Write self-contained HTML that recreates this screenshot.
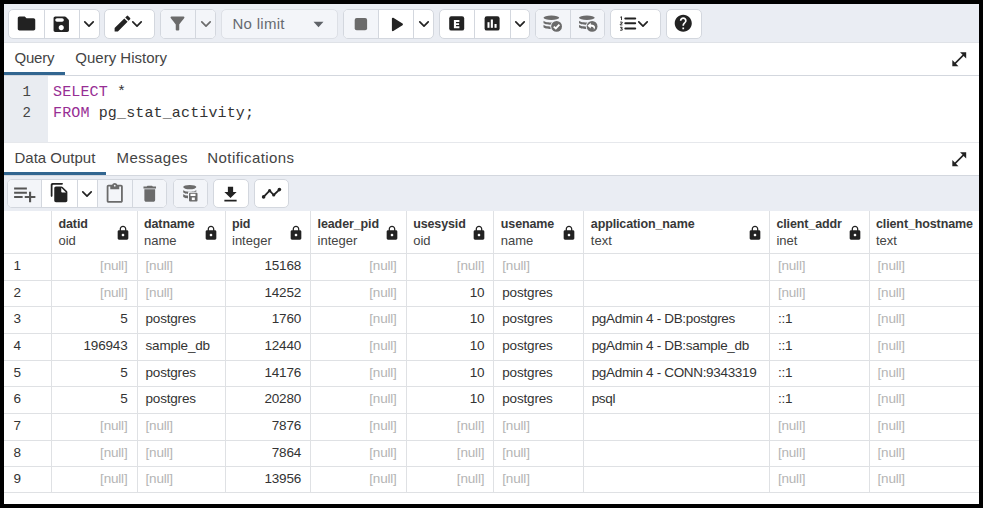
<!DOCTYPE html><html><head><meta charset="utf-8"><style>
html,body{margin:0;padding:0;width:983px;height:508px;overflow:hidden;background:#000}
body{position:relative;font-family:'Liberation Sans', sans-serif;color:#222}
</style></head><body>
<div style="position:absolute;left:4px;top:4px;width:975px;height:500px;background:#fff"></div>
<div style="position:absolute;left:4px;top:4px;width:975px;height:38px;background:#eaedf3;border-bottom:1px solid #dfe2e7"></div>
<div style="position:absolute;left:8px;top:9px;width:92px;height:30px;box-sizing:border-box;border:1px solid #d3d7de;border-radius:5px;background:#fff;overflow:hidden">
<div style="position:absolute;left:34.6px;top:0;width:1px;height:100%;background:#d3d7de"></div>
<div style="position:absolute;left:70px;top:0;width:1px;height:100%;background:#d3d7de"></div>
</div>
<svg style="position:absolute;left:16px;top:13px" width="21" height="21" viewBox="0 0 24 24"><path fill="#222" d="M10 4H4c-1.1 0-1.99.9-1.99 2L2 18c0 1.1.9 2 2 2h16c1.1 0 2-.9 2-2V8c0-1.1-.9-2-2-2h-8l-2-2z"/></svg>
<svg style="position:absolute;left:51.2px;top:13.5px" width="20.5" height="20.5" viewBox="0 0 24 24"><path fill="#222" d="M17.59 3.59c-.38-.38-.89-.59-1.42-.59H5c-1.11 0-2 .9-2 2v14c0 1.1.9 2 2 2h14c1.1 0 2-.9 2-2V7.83c0-.53-.21-1.04-.59-1.41l-2.82-2.83zM12 19c-1.66 0-3-1.34-3-3s1.34-3 3-3 3 1.34 3 3-1.34 3-3 3zm1-10H7c-1.1 0-2-.9-2-2s.9-2 2-2h6c1.1 0 2 .9 2 2s-.9 2-2 2z"/></svg>
<svg style="position:absolute;left:81.2px;top:15.5px" width="16" height="16" viewBox="0 0 16 16"><polyline points="3.8,5.9 8,10.1 12.2,5.9" fill="none" stroke="#222" stroke-width="1.7" stroke-linecap="round" stroke-linejoin="round"/></svg>
<div style="position:absolute;left:104px;top:9px;width:51px;height:30px;box-sizing:border-box;border:1px solid #d3d7de;border-radius:5px;background:#fff;overflow:hidden">
</div>
<svg style="position:absolute;left:111.6px;top:12.5px" width="21" height="21" viewBox="0 0 24 24"><path fill="#222" d="M3 17.25V21h3.75L17.81 9.94l-3.75-3.75L3 17.25zM20.71 7.04c.39-.39.39-1.02 0-1.41l-2.34-2.34a.9959.9959 0 0 0-1.41 0l-1.83 1.83 3.75 3.75 1.83-1.83z"/></svg>
<svg style="position:absolute;left:129.2px;top:15.5px" width="16" height="16" viewBox="0 0 16 16"><polyline points="3.8,5.9 8,10.1 12.2,5.9" fill="none" stroke="#222" stroke-width="1.7" stroke-linecap="round" stroke-linejoin="round"/></svg>
<div style="position:absolute;left:160px;top:9px;width:56px;height:30px;box-sizing:border-box;border:1px solid #d3d7de;border-radius:5px;background:#fff;overflow:hidden">
<div style="position:absolute;left:-1px;top:0;width:56px;height:100%;background:#f3f5f9"></div>
<div style="position:absolute;left:34.19999999999999px;top:0;width:1px;height:100%;background:#d3d7de"></div>
</div>
<svg style="position:absolute;left:167.2px;top:12.6px" width="21" height="21" viewBox="0 0 24 24"><path fill="#6b6b6b" d="M4.25 5.61C6.27 8.2 10 13 10 13v6c0 .55.45 1 1 1h2c.55 0 1-.45 1-1v-6s3.72-4.8 5.74-7.39c.51-.66.04-1.61-.79-1.61H5.04c-.83 0-1.3.95-.79 1.61z"/></svg>
<svg style="position:absolute;left:197.5px;top:15.5px" width="16" height="16" viewBox="0 0 16 16"><polyline points="3.8,5.9 8,10.1 12.2,5.9" fill="none" stroke="#6b6b6b" stroke-width="1.7" stroke-linecap="round" stroke-linejoin="round"/></svg>
<div style="position:absolute;left:221px;top:9px;width:117px;height:30px;box-sizing:border-box;border:1px solid #dde0e6;border-radius:5px;background:#f3f5f9"></div>
<div style="position:absolute;left:232.4px;top:14.6px;white-space:pre;font-size:15px;line-height:18px;color:#666a70;letter-spacing:0.3px">No limit</div>
<svg style="position:absolute;left:313px;top:21px" width="11" height="7" viewBox="0 0 11 7"><path d="M0.5 0.8h10L5.5 6.2z" fill="#5f6368"/></svg>
<div style="position:absolute;left:343px;top:9px;width:91px;height:30px;box-sizing:border-box;border:1px solid #d3d7de;border-radius:5px;background:#fff;overflow:hidden">
<div style="position:absolute;left:-1px;top:0;width:35.19999999999999px;height:100%;background:#f3f5f9"></div>
<div style="position:absolute;left:34.19999999999999px;top:0;width:1px;height:100%;background:#d3d7de"></div>
<div style="position:absolute;left:69.30000000000001px;top:0;width:1px;height:100%;background:#d3d7de"></div>
</div>
<svg style="position:absolute;left:354px;top:17px" width="14" height="14" viewBox="354 17 14 14"><rect x="354.7" y="18" width="12.4" height="12.3" rx="2" fill="#6b6b6b"/></svg>
<svg style="position:absolute;left:390px;top:16px" width="15" height="16" viewBox="390 16 15 16"><path d="M391.9 18.6c0-.8.8-1.2 1.4-.8l9.2 5.8c.6.4.6 1.2 0 1.6l-9.2 5.8c-.6.4-1.4 0-1.4-.8z" fill="#222"/></svg>
<svg style="position:absolute;left:416px;top:15.5px" width="16" height="16" viewBox="0 0 16 16"><polyline points="3.8,5.9 8,10.1 12.2,5.9" fill="none" stroke="#222" stroke-width="1.7" stroke-linecap="round" stroke-linejoin="round"/></svg>
<div style="position:absolute;left:439px;top:9px;width:91px;height:30px;box-sizing:border-box;border:1px solid #d3d7de;border-radius:5px;background:#fff;overflow:hidden">
<div style="position:absolute;left:34.19999999999999px;top:0;width:1px;height:100%;background:#d3d7de"></div>
<div style="position:absolute;left:69.5px;top:0;width:1px;height:100%;background:#d3d7de"></div>
</div>
<svg style="position:absolute;left:440px;top:10px" width="90" height="28" viewBox="440 10 90 28"><rect x="449.2" y="16.3" width="15" height="14.3" rx="2.2" fill="#222"/><path d="M453.9 19.9h5.5v2h-3.4v1.3h3.1v1.9h-3.1v1.2h3.4v2H453.9z" fill="#fff"/><rect x="484.6" y="16.3" width="15" height="14.3" rx="2.2" fill="#222"/><rect x="487.5" y="22.2" width="2" height="5.6" fill="#fff"/><rect x="490.8" y="19.5" width="2.1" height="8.3" fill="#fff"/><rect x="494.5" y="24" width="2.1" height="3.8" fill="#fff"/></svg>
<svg style="position:absolute;left:511.79999999999995px;top:15.5px" width="16" height="16" viewBox="0 0 16 16"><polyline points="3.8,5.9 8,10.1 12.2,5.9" fill="none" stroke="#222" stroke-width="1.7" stroke-linecap="round" stroke-linejoin="round"/></svg>
<div style="position:absolute;left:535px;top:9px;width:70px;height:30px;box-sizing:border-box;border:1px solid #d3d7de;border-radius:5px;background:#fff;overflow:hidden">
<div style="position:absolute;left:-1px;top:0;width:70px;height:100%;background:#f3f5f9"></div>
<div style="position:absolute;left:34px;top:0;width:1px;height:100%;background:#d3d7de"></div>
</div>
<svg style="position:absolute;left:535px;top:9px" width="70" height="30" viewBox="535 9 70 30"><ellipse cx="551.35" cy="17.7" rx="7.85" ry="2.2" fill="#6b6b6b"/><path d="M543.5 20.4v2.3c0 1.1 3.5324999999999998 2 7.85 2s7.85 -.9 7.85 -2V20.4c0 1.1-3.5324999999999998 2-7.85 2s-7.85-.9-7.85-2z" fill="#6b6b6b"/><path d="M543.5 24.4v2.6c0 1.1 3.5324999999999998 2 7.85 2s7.85 -.9 7.85 -2V24.4c0 1.1-3.5324999999999998 2-7.85 2s-7.85-.9-7.85-2z" fill="#6b6b6b"/><circle cx="556.6" cy="26.4" r="6.3" fill="#f3f5f9"/><circle cx="556.6" cy="26.4" r="5.4" fill="#6b6b6b"/><polyline points="553.8,26.6 555.8,28.5 559.4,24.7" fill="none" stroke="#fff" stroke-width="1.9"/><ellipse cx="586.85" cy="17.7" rx="7.85" ry="2.2" fill="#6b6b6b"/><path d="M579 20.4v2.3c0 1.1 3.5324999999999998 2 7.85 2s7.85 -.9 7.85 -2V20.4c0 1.1-3.5324999999999998 2-7.85 2s-7.85-.9-7.85-2z" fill="#6b6b6b"/><path d="M579 24.4v2.6c0 1.1 3.5324999999999998 2 7.85 2s7.85 -.9 7.85 -2V24.4c0 1.1-3.5324999999999998 2-7.85 2s-7.85-.9-7.85-2z" fill="#6b6b6b"/><circle cx="592.1" cy="26.4" r="6.3" fill="#f3f5f9"/><circle cx="592.1" cy="26.4" r="5.4" fill="#6b6b6b"/><path d="M590.8 22.8l-3.4 2.9 3.4 2.9v-1.9c1.5 0 2.4.5 2.9 1.4.2 .4.2 1 .1 1.6.9-.7 1.3-1.6 1.2-2.6-.2-1.5-1.6-2.5-4.2-2.6z" fill="#fff"/></svg>
<div style="position:absolute;left:610px;top:9px;width:51px;height:30px;box-sizing:border-box;border:1px solid #d3d7de;border-radius:5px;background:#fff;overflow:hidden">
</div>
<svg style="position:absolute;left:610px;top:9px" width="51" height="30" viewBox="610 9 51 30"><g stroke="#222" stroke-width="2" stroke-linecap="round"><line x1="625.3" y1="18.4" x2="635.2" y2="18.4"/><line x1="625.3" y1="23.3" x2="635.2" y2="23.3"/><line x1="625.3" y1="28.6" x2="635.2" y2="28.6"/></g><g fill="none" stroke="#222" stroke-width="0.9"><path d="M620.3 17.3l1.2-.6v3.4"/><path d="M620.1 22.1h2.1v1.1l-2.1 1.2v.5h2.3"/><path d="M620.1 27.3h2.1l-1 1.3h1v1.6h-2.1"/></g></svg>
<svg style="position:absolute;left:635.2px;top:15.8px" width="16" height="16" viewBox="0 0 16 16"><polyline points="3.8,5.9 8,10.1 12.2,5.9" fill="none" stroke="#222" stroke-width="1.7" stroke-linecap="round" stroke-linejoin="round"/></svg>
<div style="position:absolute;left:666px;top:9px;width:36px;height:30px;box-sizing:border-box;border:1px solid #d3d7de;border-radius:5px;background:#fff;overflow:hidden">
</div>
<svg style="position:absolute;left:673.1px;top:12.7px" width="20.5" height="20.5" viewBox="0 0 24 24"><path fill="#222" d="M12 2C6.48 2 2 6.48 2 12s4.48 10 10 10 10-4.48 10-10S17.52 2 12 2zm1 17h-2v-2h2v2zm2.07-7.75-.9.92C13.45 12.9 13 13.5 13 15h-2v-.5c0-1.1.45-2.1 1.17-2.83l1.24-1.26c.37-.36.59-.86.59-1.41 0-1.1-.9-2-2-2s-2 .9-2 2H8c0-2.21 1.79-4 4-4s4 1.79 4 4c0 .88-.36 1.68-.93 2.25z"/></svg>
<div style="position:absolute;left:4px;top:43px;width:975px;height:32px;background:#fff;border-bottom:1px solid #d3d7de"></div>
<div style="position:absolute;left:14.5px;top:49px;white-space:pre;font-size:15px;line-height:18px;color:#444;letter-spacing:-0.2px">Query</div>
<div style="position:absolute;left:75.3px;top:49px;white-space:pre;font-size:15px;line-height:18px;color:#444">Query History</div>
<div style="position:absolute;left:4px;top:72px;width:60.5px;height:3px;background:#326690"></div>
<svg style="position:absolute;left:949.9px;top:49.6px" width="18.5" height="18.5" viewBox="0 0 24 24"><path fill="#222" d="M21 11V3h-8l3.29 3.29-10 10L3 13v8h8l-3.29-3.29 10-10z"/></svg>
<div style="position:absolute;left:4px;top:76px;width:44px;height:66px;background:#e9ecf1"></div>
<div style="position:absolute;left:4px;top:142px;width:975px;height:1px;background:#e6e8ec"></div>
<div style="position:absolute;left:20px;top:82px;white-space:pre;font-family:'Liberation Mono', monospace;font-size:14px;line-height:21.3px;color:#444;width:11px;text-align:right">1</div>
<div style="position:absolute;left:20px;top:103.3px;white-space:pre;font-family:'Liberation Mono', monospace;font-size:14px;line-height:21.3px;color:#444;width:11px;text-align:right">2</div>
<div style="position:absolute;left:53px;top:82px;white-space:pre;font-family:'Liberation Mono', monospace;font-size:15px;line-height:21.3px;color:#333;letter-spacing:0.14px"><span style="color:#972e94">SELECT</span> *</div>
<div style="position:absolute;left:53px;top:103.3px;white-space:pre;font-family:'Liberation Mono', monospace;font-size:15px;line-height:21.3px;color:#333;letter-spacing:0.14px"><span style="color:#972e94">FROM</span> pg_stat_activity;</div>
<div style="position:absolute;left:14.5px;top:149px;white-space:pre;font-size:15px;line-height:18px;color:#444">Data Output</div>
<div style="position:absolute;left:116.6px;top:149px;white-space:pre;font-size:15px;line-height:18px;color:#444;letter-spacing:0.38px">Messages</div>
<div style="position:absolute;left:207.3px;top:149px;white-space:pre;font-size:15px;line-height:18px;color:#444;letter-spacing:0.42px">Notifications</div>
<div style="position:absolute;left:4px;top:172px;width:102px;height:3px;background:#326690"></div>
<div style="position:absolute;left:4px;top:175px;width:975px;height:1px;background:#d3d7de"></div>
<svg style="position:absolute;left:949.9px;top:149.6px" width="18.5" height="18.5" viewBox="0 0 24 24"><path fill="#222" d="M21 11V3h-8l3.29 3.29-10 10L3 13v8h8l-3.29-3.29 10-10z"/></svg>
<div style="position:absolute;left:4px;top:176px;width:975px;height:35px;background:#eaedf3"></div>
<div style="position:absolute;left:7px;top:178.5px;width:160px;height:29.5px;box-sizing:border-box;border:1px solid #d3d7de;border-radius:5px;background:#fff;overflow:hidden">
<div style="position:absolute;left:-1px;top:0;width:34px;height:100%;background:#f3f5f9"></div>
<div style="position:absolute;left:89px;top:0;width:70px;height:100%;background:#f3f5f9"></div>
<div style="position:absolute;left:33px;top:0;width:1px;height:100%;background:#d3d7de"></div>
<div style="position:absolute;left:68.5px;top:0;width:1px;height:100%;background:#d3d7de"></div>
<div style="position:absolute;left:89px;top:0;width:1px;height:100%;background:#d3d7de"></div>
<div style="position:absolute;left:124px;top:0;width:1px;height:100%;background:#d3d7de"></div>
</div>
<svg style="position:absolute;left:11.8px;top:181.2px" width="25.5" height="25.5" viewBox="0 0 24 24"><path fill="#555" d="M14 10H2v2h12v-2zm0-4H2v2h12V6zm4 8v-4h-2v4h-4v2h4v4h2v-4h4v-2h-4zM2 16h8v-2H2v2z"/></svg>
<svg style="position:absolute;left:49px;top:182px" width="21" height="21" viewBox="0 0 24 24"><path fill="#222" d="M15 1H4c-1.1 0-2 .9-2 2v13c0 .55.45 1 1 1s1-.45 1-1V4c0-.55.45-1 1-1h10c.55 0 1-.45 1-1s-.45-1-1-1zm.59 4.59 4.83 4.83c.37.37.58.88.58 1.41V21c0 1.1-.9 2-2 2H7.99C6.89 23 6 22.1 6 21l.01-14c0-1.1.89-2 1.99-2h6.17c.53 0 1.04.21 1.42.59zM15 12h4.5L14 6.5V11c0 .55.45 1 1 1z"/></svg>
<svg style="position:absolute;left:79.2px;top:185.5px" width="16" height="16" viewBox="0 0 16 16"><polyline points="3.8,5.9 8,10.1 12.2,5.9" fill="none" stroke="#222" stroke-width="1.7" stroke-linecap="round" stroke-linejoin="round"/></svg>
<svg style="position:absolute;left:104.2px;top:182.6px" width="21.5" height="21.5" viewBox="0 0 24 24"><path fill="#6b6b6b" d="M19 2h-4.18C14.4.84 13.3 0 12 0c-1.3 0-2.4.84-2.82 2H5c-1.1 0-2 .9-2 2v16c0 1.1.9 2 2 2h14c1.1 0 2-.9 2-2V4c0-1.1-.9-2-2-2zm-7 0c.55 0 1 .45 1 1s-.45 1-1 1-1-.45-1-1 .45-1 1-1zm7 18H5V4h2v3h10V4h2v16z"/></svg>
<svg style="position:absolute;left:139.2px;top:183.2px" width="21.5" height="21.5" viewBox="0 0 24 24"><path fill="#6b6b6b" d="M6 19c0 1.1.9 2 2 2h8c1.1 0 2-.9 2-2V7H6v12zM19 4h-3.5l-1-1h-5l-1 1H5v2h14V4z"/></svg>
<div style="position:absolute;left:172.5px;top:178.5px;width:35px;height:29.5px;box-sizing:border-box;border:1px solid #d3d7de;border-radius:5px;background:#fff;overflow:hidden">
<div style="position:absolute;left:-1.0px;top:0;width:35.0px;height:100%;background:#f3f5f9"></div>
</div>
<svg style="position:absolute;left:172px;top:178px" width="36" height="30" viewBox="172 178 36 30"><ellipse cx="189.75" cy="187.1" rx="6.55" ry="2.2" fill="#6b6b6b"/><path d="M183.2 189.8v2.3c0 1.1 2.9475 2 6.55 2s6.55 -.9 6.55 -2V189.8c0 1.1-2.9475 2-6.55 2s-6.55-.9-6.55-2z" fill="#6b6b6b"/><path d="M183.2 193.8v2.6c0 1.1 2.9475 2 6.55 2s6.55 -.9 6.55 -2V193.8c0 1.1-2.9475 2-6.55 2s-6.55-.9-6.55-2z" fill="#6b6b6b"/><rect x="188" y="191.8" width="10.5" height="10.7" rx="1.2" fill="#f3f5f9"/><rect x="189" y="192.8" width="8.5" height="8.7" rx="1" fill="#6b6b6b"/><rect x="190.5" y="193.8" width="5" height="2.2" fill="#fff"/><rect x="191.8" y="197.5" width="3" height="2.6" fill="#fff"/></svg>
<div style="position:absolute;left:213px;top:178.5px;width:35.5px;height:29.5px;box-sizing:border-box;border:1px solid #d3d7de;border-radius:5px;background:#fff;overflow:hidden">
</div>
<svg style="position:absolute;left:220.3px;top:183.5px" width="21" height="21" viewBox="0 0 24 24"><path fill="#222" d="M19 9h-4V3H9v6H5l7 7 7-7zM5 18v2h14v-2H5z"/></svg>
<div style="position:absolute;left:253.5px;top:178.5px;width:35.5px;height:29.5px;box-sizing:border-box;border:1px solid #d3d7de;border-radius:5px;background:#fff;overflow:hidden">
</div>
<svg style="position:absolute;left:256px;top:182px" width="32" height="22" viewBox="256 182 32 22"><polyline points="263.6,196.9 269.6,190.7 273.7,195 279.4,189.6" fill="none" stroke="#222" stroke-width="1.8" stroke-linejoin="round"/><circle cx="263.6" cy="196.9" r="1.8" fill="#222"/><circle cx="269.6" cy="190.7" r="1.6" fill="#222"/><circle cx="273.7" cy="195" r="1.6" fill="#222"/><circle cx="279.4" cy="189.6" r="1.8" fill="#222"/></svg>
<div style="position:absolute;left:4px;top:211px;width:975px;height:42.400000000000006px;background:#fff"></div>
<div style="position:absolute;left:58.5px;top:217.3px;white-space:pre;font-size:12.5px;font-weight:bold;line-height:15px;color:#383838;letter-spacing:-0.12px">datid</div>
<div style="position:absolute;left:58.5px;top:233px;white-space:pre;font-size:13px;line-height:15px;color:#444">oid</div>
<svg style="position:absolute;left:114.5px;top:224.7px" width="16" height="16" viewBox="0 0 24 24"><path fill="#222" d="M18 8h-1V6c0-2.76-2.24-5-5-5S7 3.24 7 6v2H6c-1.1 0-2 .9-2 2v10c0 1.1.9 2 2 2h12c1.1 0 2-.9 2-2V10c0-1.1-.9-2-2-2zm-6 9c-1.1 0-2-.9-2-2s.9-2 2-2 2 .9 2 2-.9 2-2 2zm3.1-9H8.9V6c0-1.71 1.39-3.1 3.1-3.1 1.71 0 3.1 1.39 3.1 3.1v2z"/></svg>
<div style="position:absolute;left:144px;top:217.3px;white-space:pre;font-size:12.5px;font-weight:bold;line-height:15px;color:#383838;letter-spacing:-0.12px">datname</div>
<div style="position:absolute;left:144px;top:233px;white-space:pre;font-size:13px;line-height:15px;color:#444">name</div>
<svg style="position:absolute;left:202.5px;top:224.7px" width="16" height="16" viewBox="0 0 24 24"><path fill="#222" d="M18 8h-1V6c0-2.76-2.24-5-5-5S7 3.24 7 6v2H6c-1.1 0-2 .9-2 2v10c0 1.1.9 2 2 2h12c1.1 0 2-.9 2-2V10c0-1.1-.9-2-2-2zm-6 9c-1.1 0-2-.9-2-2s.9-2 2-2 2 .9 2 2-.9 2-2 2zm3.1-9H8.9V6c0-1.71 1.39-3.1 3.1-3.1 1.71 0 3.1 1.39 3.1 3.1v2z"/></svg>
<div style="position:absolute;left:232px;top:217.3px;white-space:pre;font-size:12.5px;font-weight:bold;line-height:15px;color:#383838;letter-spacing:-0.12px">pid</div>
<div style="position:absolute;left:232px;top:233px;white-space:pre;font-size:13px;line-height:15px;color:#444">integer</div>
<svg style="position:absolute;left:288.1px;top:224.7px" width="16" height="16" viewBox="0 0 24 24"><path fill="#222" d="M18 8h-1V6c0-2.76-2.24-5-5-5S7 3.24 7 6v2H6c-1.1 0-2 .9-2 2v10c0 1.1.9 2 2 2h12c1.1 0 2-.9 2-2V10c0-1.1-.9-2-2-2zm-6 9c-1.1 0-2-.9-2-2s.9-2 2-2 2 .9 2 2-.9 2-2 2zm3.1-9H8.9V6c0-1.71 1.39-3.1 3.1-3.1 1.71 0 3.1 1.39 3.1 3.1v2z"/></svg>
<div style="position:absolute;left:317.6px;top:217.3px;white-space:pre;font-size:12.5px;font-weight:bold;line-height:15px;color:#383838;letter-spacing:-0.12px">leader_pid</div>
<div style="position:absolute;left:317.6px;top:233px;white-space:pre;font-size:13px;line-height:15px;color:#444">integer</div>
<svg style="position:absolute;left:383.7px;top:224.7px" width="16" height="16" viewBox="0 0 24 24"><path fill="#222" d="M18 8h-1V6c0-2.76-2.24-5-5-5S7 3.24 7 6v2H6c-1.1 0-2 .9-2 2v10c0 1.1.9 2 2 2h12c1.1 0 2-.9 2-2V10c0-1.1-.9-2-2-2zm-6 9c-1.1 0-2-.9-2-2s.9-2 2-2 2 .9 2 2-.9 2-2 2zm3.1-9H8.9V6c0-1.71 1.39-3.1 3.1-3.1 1.71 0 3.1 1.39 3.1 3.1v2z"/></svg>
<div style="position:absolute;left:413.2px;top:217.3px;white-space:pre;font-size:12.5px;font-weight:bold;line-height:15px;color:#383838;letter-spacing:-0.12px">usesysid</div>
<div style="position:absolute;left:413.2px;top:233px;white-space:pre;font-size:13px;line-height:15px;color:#444">oid</div>
<svg style="position:absolute;left:471.3px;top:224.7px" width="16" height="16" viewBox="0 0 24 24"><path fill="#222" d="M18 8h-1V6c0-2.76-2.24-5-5-5S7 3.24 7 6v2H6c-1.1 0-2 .9-2 2v10c0 1.1.9 2 2 2h12c1.1 0 2-.9 2-2V10c0-1.1-.9-2-2-2zm-6 9c-1.1 0-2-.9-2-2s.9-2 2-2 2 .9 2 2-.9 2-2 2zm3.1-9H8.9V6c0-1.71 1.39-3.1 3.1-3.1 1.71 0 3.1 1.39 3.1 3.1v2z"/></svg>
<div style="position:absolute;left:500.8px;top:217.3px;white-space:pre;font-size:12.5px;font-weight:bold;line-height:15px;color:#383838;letter-spacing:-0.12px">usename</div>
<div style="position:absolute;left:500.8px;top:233px;white-space:pre;font-size:13px;line-height:15px;color:#444">name</div>
<svg style="position:absolute;left:561.3px;top:224.7px" width="16" height="16" viewBox="0 0 24 24"><path fill="#222" d="M18 8h-1V6c0-2.76-2.24-5-5-5S7 3.24 7 6v2H6c-1.1 0-2 .9-2 2v10c0 1.1.9 2 2 2h12c1.1 0 2-.9 2-2V10c0-1.1-.9-2-2-2zm-6 9c-1.1 0-2-.9-2-2s.9-2 2-2 2 .9 2 2-.9 2-2 2zm3.1-9H8.9V6c0-1.71 1.39-3.1 3.1-3.1 1.71 0 3.1 1.39 3.1 3.1v2z"/></svg>
<div style="position:absolute;left:590.8px;top:217.3px;white-space:pre;font-size:12.5px;font-weight:bold;line-height:15px;color:#383838;letter-spacing:-0.12px">application_name</div>
<div style="position:absolute;left:590.8px;top:233px;white-space:pre;font-size:13px;line-height:15px;color:#444">text</div>
<svg style="position:absolute;left:746.9px;top:224.7px" width="16" height="16" viewBox="0 0 24 24"><path fill="#222" d="M18 8h-1V6c0-2.76-2.24-5-5-5S7 3.24 7 6v2H6c-1.1 0-2 .9-2 2v10c0 1.1.9 2 2 2h12c1.1 0 2-.9 2-2V10c0-1.1-.9-2-2-2zm-6 9c-1.1 0-2-.9-2-2s.9-2 2-2 2 .9 2 2-.9 2-2 2zm3.1-9H8.9V6c0-1.71 1.39-3.1 3.1-3.1 1.71 0 3.1 1.39 3.1 3.1v2z"/></svg>
<div style="position:absolute;left:776.4px;top:217.3px;white-space:pre;font-size:12.5px;font-weight:bold;line-height:15px;color:#383838;letter-spacing:-0.12px">client_addr</div>
<div style="position:absolute;left:776.4px;top:233px;white-space:pre;font-size:13px;line-height:15px;color:#444">inet</div>
<svg style="position:absolute;left:846.5px;top:224.7px" width="16" height="16" viewBox="0 0 24 24"><path fill="#222" d="M18 8h-1V6c0-2.76-2.24-5-5-5S7 3.24 7 6v2H6c-1.1 0-2 .9-2 2v10c0 1.1.9 2 2 2h12c1.1 0 2-.9 2-2V10c0-1.1-.9-2-2-2zm-6 9c-1.1 0-2-.9-2-2s.9-2 2-2 2 .9 2 2-.9 2-2 2zm3.1-9H8.9V6c0-1.71 1.39-3.1 3.1-3.1 1.71 0 3.1 1.39 3.1 3.1v2z"/></svg>
<div style="position:absolute;left:876px;top:217.3px;white-space:pre;font-size:12.5px;font-weight:bold;line-height:15px;color:#383838;letter-spacing:-0.12px">client_hostname</div>
<div style="position:absolute;left:876px;top:233px;white-space:pre;font-size:13px;line-height:15px;color:#444">text</div>
<div style="position:absolute;left:51.0px;top:211px;width:1px;height:281.2px;background:#dfe1e4"></div>
<div style="position:absolute;left:136.5px;top:211px;width:1px;height:281.2px;background:#dfe1e4"></div>
<div style="position:absolute;left:224.5px;top:211px;width:1px;height:281.2px;background:#dfe1e4"></div>
<div style="position:absolute;left:310.1px;top:211px;width:1px;height:281.2px;background:#dfe1e4"></div>
<div style="position:absolute;left:405.7px;top:211px;width:1px;height:281.2px;background:#dfe1e4"></div>
<div style="position:absolute;left:493.3px;top:211px;width:1px;height:281.2px;background:#dfe1e4"></div>
<div style="position:absolute;left:583.3px;top:211px;width:1px;height:281.2px;background:#dfe1e4"></div>
<div style="position:absolute;left:768.9px;top:211px;width:1px;height:281.2px;background:#dfe1e4"></div>
<div style="position:absolute;left:868.5px;top:211px;width:1px;height:281.2px;background:#dfe1e4"></div>
<div style="position:absolute;left:4px;top:253px;width:975px;height:1px;background:#dfe1e4"></div>
<div style="position:absolute;left:4px;top:280px;width:975px;height:1px;background:#dfe1e4"></div>
<div style="position:absolute;left:4px;top:306px;width:975px;height:1px;background:#dfe1e4"></div>
<div style="position:absolute;left:4px;top:333px;width:975px;height:1px;background:#dfe1e4"></div>
<div style="position:absolute;left:4px;top:360px;width:975px;height:1px;background:#dfe1e4"></div>
<div style="position:absolute;left:4px;top:386px;width:975px;height:1px;background:#dfe1e4"></div>
<div style="position:absolute;left:4px;top:413px;width:975px;height:1px;background:#dfe1e4"></div>
<div style="position:absolute;left:4px;top:440px;width:975px;height:1px;background:#dfe1e4"></div>
<div style="position:absolute;left:4px;top:466px;width:975px;height:1px;background:#dfe1e4"></div>
<div style="position:absolute;left:4px;top:492px;width:975px;height:1px;background:#dfe1e4"></div>
<div style="position:absolute;left:13.4px;top:258.4px;white-space:pre;font-size:13.5px;line-height:15px;color:#333">1</div>
<div style="position:absolute;left:51.5px;top:258.4px;width:76.0px;text-align:right;white-space:pre;font-size:13.5px;letter-spacing:-0.18px;line-height:15px;color:#b4b4b4">[null]</div>
<div style="position:absolute;left:145.5px;top:258.4px;white-space:pre;font-size:13.5px;letter-spacing:-0.18px;line-height:15px;color:#b4b4b4">[null]</div>
<div style="position:absolute;left:225px;top:258.4px;width:76.10000000000002px;text-align:right;white-space:pre;font-size:13.5px;letter-spacing:-0.18px;line-height:15px;color:#333">15168</div>
<div style="position:absolute;left:310.6px;top:258.4px;width:86.09999999999997px;text-align:right;white-space:pre;font-size:13.5px;letter-spacing:-0.18px;line-height:15px;color:#b4b4b4">[null]</div>
<div style="position:absolute;left:406.2px;top:258.4px;width:78.10000000000002px;text-align:right;white-space:pre;font-size:13.5px;letter-spacing:-0.18px;line-height:15px;color:#b4b4b4">[null]</div>
<div style="position:absolute;left:502.3px;top:258.4px;white-space:pre;font-size:13.5px;letter-spacing:-0.18px;line-height:15px;color:#b4b4b4">[null]</div>
<div style="position:absolute;left:777.9px;top:258.4px;white-space:pre;font-size:13.5px;letter-spacing:-0.18px;line-height:15px;color:#b4b4b4">[null]</div>
<div style="position:absolute;left:877.5px;top:258.4px;white-space:pre;font-size:13.5px;letter-spacing:-0.18px;line-height:15px;color:#b4b4b4">[null]</div>
<div style="position:absolute;left:13.4px;top:284.9px;white-space:pre;font-size:13.5px;line-height:15px;color:#333">2</div>
<div style="position:absolute;left:51.5px;top:284.9px;width:76.0px;text-align:right;white-space:pre;font-size:13.5px;letter-spacing:-0.18px;line-height:15px;color:#b4b4b4">[null]</div>
<div style="position:absolute;left:145.5px;top:284.9px;white-space:pre;font-size:13.5px;letter-spacing:-0.18px;line-height:15px;color:#b4b4b4">[null]</div>
<div style="position:absolute;left:225px;top:284.9px;width:76.10000000000002px;text-align:right;white-space:pre;font-size:13.5px;letter-spacing:-0.18px;line-height:15px;color:#333">14252</div>
<div style="position:absolute;left:310.6px;top:284.9px;width:86.09999999999997px;text-align:right;white-space:pre;font-size:13.5px;letter-spacing:-0.18px;line-height:15px;color:#b4b4b4">[null]</div>
<div style="position:absolute;left:406.2px;top:284.9px;width:78.10000000000002px;text-align:right;white-space:pre;font-size:13.5px;letter-spacing:-0.18px;line-height:15px;color:#333">10</div>
<div style="position:absolute;left:502.3px;top:284.9px;white-space:pre;font-size:13.5px;letter-spacing:-0.18px;line-height:15px;color:#333">postgres</div>
<div style="position:absolute;left:777.9px;top:284.9px;white-space:pre;font-size:13.5px;letter-spacing:-0.18px;line-height:15px;color:#b4b4b4">[null]</div>
<div style="position:absolute;left:877.5px;top:284.9px;white-space:pre;font-size:13.5px;letter-spacing:-0.18px;line-height:15px;color:#b4b4b4">[null]</div>
<div style="position:absolute;left:13.4px;top:311.4px;white-space:pre;font-size:13.5px;line-height:15px;color:#333">3</div>
<div style="position:absolute;left:51.5px;top:311.4px;width:76.0px;text-align:right;white-space:pre;font-size:13.5px;letter-spacing:-0.18px;line-height:15px;color:#333">5</div>
<div style="position:absolute;left:145.5px;top:311.4px;white-space:pre;font-size:13.5px;letter-spacing:-0.18px;line-height:15px;color:#333">postgres</div>
<div style="position:absolute;left:225px;top:311.4px;width:76.10000000000002px;text-align:right;white-space:pre;font-size:13.5px;letter-spacing:-0.18px;line-height:15px;color:#333">1760</div>
<div style="position:absolute;left:310.6px;top:311.4px;width:86.09999999999997px;text-align:right;white-space:pre;font-size:13.5px;letter-spacing:-0.18px;line-height:15px;color:#b4b4b4">[null]</div>
<div style="position:absolute;left:406.2px;top:311.4px;width:78.10000000000002px;text-align:right;white-space:pre;font-size:13.5px;letter-spacing:-0.18px;line-height:15px;color:#333">10</div>
<div style="position:absolute;left:502.3px;top:311.4px;white-space:pre;font-size:13.5px;letter-spacing:-0.18px;line-height:15px;color:#333">postgres</div>
<div style="position:absolute;left:591.6999999999999px;top:311.4px;white-space:pre;font-size:13.5px;letter-spacing:-0.33px;line-height:15px;color:#333">pgAdmin 4 - DB:postgres</div>
<div style="position:absolute;left:777.9px;top:311.4px;white-space:pre;font-size:13.5px;letter-spacing:-0.18px;line-height:15px;color:#333">::1</div>
<div style="position:absolute;left:877.5px;top:311.4px;white-space:pre;font-size:13.5px;letter-spacing:-0.18px;line-height:15px;color:#b4b4b4">[null]</div>
<div style="position:absolute;left:13.4px;top:338.4px;white-space:pre;font-size:13.5px;line-height:15px;color:#333">4</div>
<div style="position:absolute;left:51.5px;top:338.4px;width:76.0px;text-align:right;white-space:pre;font-size:13.5px;letter-spacing:-0.18px;line-height:15px;color:#333">196943</div>
<div style="position:absolute;left:145.5px;top:338.4px;white-space:pre;font-size:13.5px;letter-spacing:-0.18px;line-height:15px;color:#333">sample_db</div>
<div style="position:absolute;left:225px;top:338.4px;width:76.10000000000002px;text-align:right;white-space:pre;font-size:13.5px;letter-spacing:-0.18px;line-height:15px;color:#333">12440</div>
<div style="position:absolute;left:310.6px;top:338.4px;width:86.09999999999997px;text-align:right;white-space:pre;font-size:13.5px;letter-spacing:-0.18px;line-height:15px;color:#b4b4b4">[null]</div>
<div style="position:absolute;left:406.2px;top:338.4px;width:78.10000000000002px;text-align:right;white-space:pre;font-size:13.5px;letter-spacing:-0.18px;line-height:15px;color:#333">10</div>
<div style="position:absolute;left:502.3px;top:338.4px;white-space:pre;font-size:13.5px;letter-spacing:-0.18px;line-height:15px;color:#333">postgres</div>
<div style="position:absolute;left:591.6999999999999px;top:338.4px;white-space:pre;font-size:13.5px;letter-spacing:-0.33px;line-height:15px;color:#333">pgAdmin 4 - DB:sample_db</div>
<div style="position:absolute;left:777.9px;top:338.4px;white-space:pre;font-size:13.5px;letter-spacing:-0.18px;line-height:15px;color:#333">::1</div>
<div style="position:absolute;left:877.5px;top:338.4px;white-space:pre;font-size:13.5px;letter-spacing:-0.18px;line-height:15px;color:#b4b4b4">[null]</div>
<div style="position:absolute;left:13.4px;top:364.9px;white-space:pre;font-size:13.5px;line-height:15px;color:#333">5</div>
<div style="position:absolute;left:51.5px;top:364.9px;width:76.0px;text-align:right;white-space:pre;font-size:13.5px;letter-spacing:-0.18px;line-height:15px;color:#333">5</div>
<div style="position:absolute;left:145.5px;top:364.9px;white-space:pre;font-size:13.5px;letter-spacing:-0.18px;line-height:15px;color:#333">postgres</div>
<div style="position:absolute;left:225px;top:364.9px;width:76.10000000000002px;text-align:right;white-space:pre;font-size:13.5px;letter-spacing:-0.18px;line-height:15px;color:#333">14176</div>
<div style="position:absolute;left:310.6px;top:364.9px;width:86.09999999999997px;text-align:right;white-space:pre;font-size:13.5px;letter-spacing:-0.18px;line-height:15px;color:#b4b4b4">[null]</div>
<div style="position:absolute;left:406.2px;top:364.9px;width:78.10000000000002px;text-align:right;white-space:pre;font-size:13.5px;letter-spacing:-0.18px;line-height:15px;color:#333">10</div>
<div style="position:absolute;left:502.3px;top:364.9px;white-space:pre;font-size:13.5px;letter-spacing:-0.18px;line-height:15px;color:#333">postgres</div>
<div style="position:absolute;left:591.6999999999999px;top:364.9px;white-space:pre;font-size:13.5px;letter-spacing:-0.33px;line-height:15px;color:#333">pgAdmin 4 - CONN:9343319</div>
<div style="position:absolute;left:777.9px;top:364.9px;white-space:pre;font-size:13.5px;letter-spacing:-0.18px;line-height:15px;color:#333">::1</div>
<div style="position:absolute;left:877.5px;top:364.9px;white-space:pre;font-size:13.5px;letter-spacing:-0.18px;line-height:15px;color:#b4b4b4">[null]</div>
<div style="position:absolute;left:13.4px;top:391.4px;white-space:pre;font-size:13.5px;line-height:15px;color:#333">6</div>
<div style="position:absolute;left:51.5px;top:391.4px;width:76.0px;text-align:right;white-space:pre;font-size:13.5px;letter-spacing:-0.18px;line-height:15px;color:#333">5</div>
<div style="position:absolute;left:145.5px;top:391.4px;white-space:pre;font-size:13.5px;letter-spacing:-0.18px;line-height:15px;color:#333">postgres</div>
<div style="position:absolute;left:225px;top:391.4px;width:76.10000000000002px;text-align:right;white-space:pre;font-size:13.5px;letter-spacing:-0.18px;line-height:15px;color:#333">20280</div>
<div style="position:absolute;left:310.6px;top:391.4px;width:86.09999999999997px;text-align:right;white-space:pre;font-size:13.5px;letter-spacing:-0.18px;line-height:15px;color:#b4b4b4">[null]</div>
<div style="position:absolute;left:406.2px;top:391.4px;width:78.10000000000002px;text-align:right;white-space:pre;font-size:13.5px;letter-spacing:-0.18px;line-height:15px;color:#333">10</div>
<div style="position:absolute;left:502.3px;top:391.4px;white-space:pre;font-size:13.5px;letter-spacing:-0.18px;line-height:15px;color:#333">postgres</div>
<div style="position:absolute;left:591.6999999999999px;top:391.4px;white-space:pre;font-size:13.5px;letter-spacing:-0.33px;line-height:15px;color:#333">psql</div>
<div style="position:absolute;left:777.9px;top:391.4px;white-space:pre;font-size:13.5px;letter-spacing:-0.18px;line-height:15px;color:#333">::1</div>
<div style="position:absolute;left:877.5px;top:391.4px;white-space:pre;font-size:13.5px;letter-spacing:-0.18px;line-height:15px;color:#b4b4b4">[null]</div>
<div style="position:absolute;left:13.4px;top:418.4px;white-space:pre;font-size:13.5px;line-height:15px;color:#333">7</div>
<div style="position:absolute;left:51.5px;top:418.4px;width:76.0px;text-align:right;white-space:pre;font-size:13.5px;letter-spacing:-0.18px;line-height:15px;color:#b4b4b4">[null]</div>
<div style="position:absolute;left:145.5px;top:418.4px;white-space:pre;font-size:13.5px;letter-spacing:-0.18px;line-height:15px;color:#b4b4b4">[null]</div>
<div style="position:absolute;left:225px;top:418.4px;width:76.10000000000002px;text-align:right;white-space:pre;font-size:13.5px;letter-spacing:-0.18px;line-height:15px;color:#333">7876</div>
<div style="position:absolute;left:310.6px;top:418.4px;width:86.09999999999997px;text-align:right;white-space:pre;font-size:13.5px;letter-spacing:-0.18px;line-height:15px;color:#b4b4b4">[null]</div>
<div style="position:absolute;left:406.2px;top:418.4px;width:78.10000000000002px;text-align:right;white-space:pre;font-size:13.5px;letter-spacing:-0.18px;line-height:15px;color:#b4b4b4">[null]</div>
<div style="position:absolute;left:502.3px;top:418.4px;white-space:pre;font-size:13.5px;letter-spacing:-0.18px;line-height:15px;color:#b4b4b4">[null]</div>
<div style="position:absolute;left:777.9px;top:418.4px;white-space:pre;font-size:13.5px;letter-spacing:-0.18px;line-height:15px;color:#b4b4b4">[null]</div>
<div style="position:absolute;left:877.5px;top:418.4px;white-space:pre;font-size:13.5px;letter-spacing:-0.18px;line-height:15px;color:#b4b4b4">[null]</div>
<div style="position:absolute;left:13.4px;top:444.9px;white-space:pre;font-size:13.5px;line-height:15px;color:#333">8</div>
<div style="position:absolute;left:51.5px;top:444.9px;width:76.0px;text-align:right;white-space:pre;font-size:13.5px;letter-spacing:-0.18px;line-height:15px;color:#b4b4b4">[null]</div>
<div style="position:absolute;left:145.5px;top:444.9px;white-space:pre;font-size:13.5px;letter-spacing:-0.18px;line-height:15px;color:#b4b4b4">[null]</div>
<div style="position:absolute;left:225px;top:444.9px;width:76.10000000000002px;text-align:right;white-space:pre;font-size:13.5px;letter-spacing:-0.18px;line-height:15px;color:#333">7864</div>
<div style="position:absolute;left:310.6px;top:444.9px;width:86.09999999999997px;text-align:right;white-space:pre;font-size:13.5px;letter-spacing:-0.18px;line-height:15px;color:#b4b4b4">[null]</div>
<div style="position:absolute;left:406.2px;top:444.9px;width:78.10000000000002px;text-align:right;white-space:pre;font-size:13.5px;letter-spacing:-0.18px;line-height:15px;color:#b4b4b4">[null]</div>
<div style="position:absolute;left:502.3px;top:444.9px;white-space:pre;font-size:13.5px;letter-spacing:-0.18px;line-height:15px;color:#b4b4b4">[null]</div>
<div style="position:absolute;left:777.9px;top:444.9px;white-space:pre;font-size:13.5px;letter-spacing:-0.18px;line-height:15px;color:#b4b4b4">[null]</div>
<div style="position:absolute;left:877.5px;top:444.9px;white-space:pre;font-size:13.5px;letter-spacing:-0.18px;line-height:15px;color:#b4b4b4">[null]</div>
<div style="position:absolute;left:13.4px;top:470.9px;white-space:pre;font-size:13.5px;line-height:15px;color:#333">9</div>
<div style="position:absolute;left:51.5px;top:470.9px;width:76.0px;text-align:right;white-space:pre;font-size:13.5px;letter-spacing:-0.18px;line-height:15px;color:#b4b4b4">[null]</div>
<div style="position:absolute;left:145.5px;top:470.9px;white-space:pre;font-size:13.5px;letter-spacing:-0.18px;line-height:15px;color:#b4b4b4">[null]</div>
<div style="position:absolute;left:225px;top:470.9px;width:76.10000000000002px;text-align:right;white-space:pre;font-size:13.5px;letter-spacing:-0.18px;line-height:15px;color:#333">13956</div>
<div style="position:absolute;left:310.6px;top:470.9px;width:86.09999999999997px;text-align:right;white-space:pre;font-size:13.5px;letter-spacing:-0.18px;line-height:15px;color:#b4b4b4">[null]</div>
<div style="position:absolute;left:406.2px;top:470.9px;width:78.10000000000002px;text-align:right;white-space:pre;font-size:13.5px;letter-spacing:-0.18px;line-height:15px;color:#b4b4b4">[null]</div>
<div style="position:absolute;left:502.3px;top:470.9px;white-space:pre;font-size:13.5px;letter-spacing:-0.18px;line-height:15px;color:#b4b4b4">[null]</div>
<div style="position:absolute;left:777.9px;top:470.9px;white-space:pre;font-size:13.5px;letter-spacing:-0.18px;line-height:15px;color:#b4b4b4">[null]</div>
<div style="position:absolute;left:877.5px;top:470.9px;white-space:pre;font-size:13.5px;letter-spacing:-0.18px;line-height:15px;color:#b4b4b4">[null]</div>
</body></html>
